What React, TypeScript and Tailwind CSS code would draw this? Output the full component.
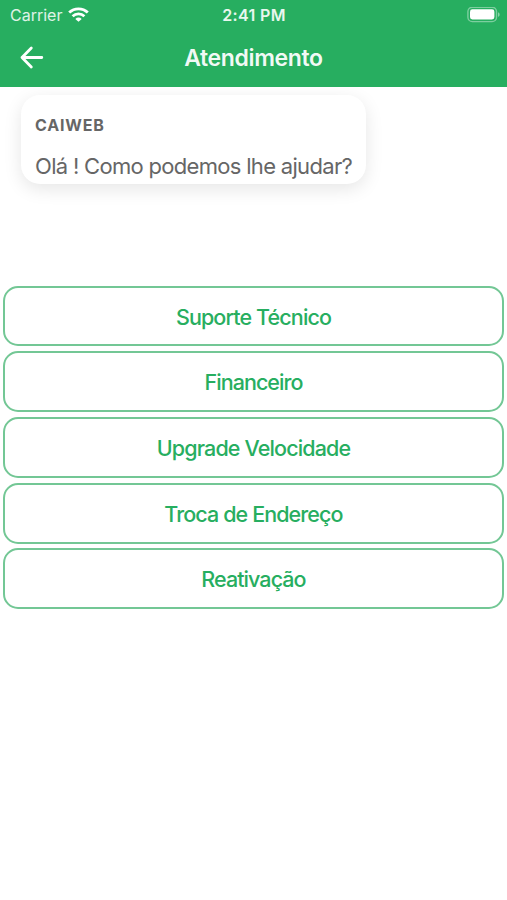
import React from 'react';

const OPTIONS = [
  { label: 'Suporte Técnico', box: 'h-[60px] mb-[5px]', text: 'tracking-[-0.88px]' },
  { label: 'Financeiro', box: 'h-[61px] mb-[5px]', text: 'tracking-[-0.94px]' },
  { label: 'Upgrade Velocidade', box: 'h-[61px] mb-[5px]', text: 'tracking-[-0.86px]' },
  { label: 'Troca de Endereço', box: 'h-[61px] mb-[4px]', text: 'tracking-[-0.9px]' },
  { label: 'Reativação', box: 'h-[61px]', text: 'tracking-[-0.94px]' },
];

const WifiIcon = () => (
  <svg className="h-[15px] w-[21px]" viewBox="0 0 21 15" fill="none" stroke="white" strokeWidth="2.8">
    <path d="M1.2 5.6a13.4 13.4 0 0 1 18.6 0" />
    <path d="M4.6 9.2a8.5 8.5 0 0 1 11.8 0" />
    <path d="M10.5 14.8 7.3 11.9a4.7 4.7 0 0 1 6.4 0z" fill="white" stroke="none" />
  </svg>
);

const BatteryIcon = () => (
  <svg className="h-4 w-[34px]" viewBox="0 0 34 16" fill="none">
    <rect x="0.9" y="0.2" width="28.6" height="14.4" rx="4.4" stroke="white" strokeOpacity="0.4" strokeWidth="1.4" />
    <rect x="3" y="2.3" width="24.4" height="10.2" rx="2.4" fill="white" />
    <path d="M31 5.2c2.2.8 2.2 3.8 0 4.6z" fill="white" fillOpacity="0.45" />
  </svg>
);

const BackIcon = () => (
  <svg className="h-6 w-6" viewBox="0 0 24 24" fill="none" stroke="white" strokeWidth="2.8" strokeLinecap="round" strokeLinejoin="round">
    <path d="M11.3 2.1 2 11.5l9.3 9.4M2 11.5h19.8" />
  </svg>
);

function StatusBar() {
  return (
    <div className="grid h-[29px] grid-cols-3 items-center text-[16px] text-white">
      <div className="flex items-center gap-[6px] pl-[10px]">
        <span className="text-white/85">Carrier</span>
        <WifiIcon />
      </div>
      <span className="pl-px text-center font-semibold tracking-[0.35px] text-white/90">2:41 PM</span>
      <div className="flex justify-end pr-[6px]">
        <BatteryIcon />
      </div>
    </div>
  );
}

function App() {
  return (
    <div className="h-[900px] w-[507px] overflow-hidden bg-white font-['Inter','Liberation_Sans',sans-serif]">
      <header className="relative z-10 h-[87px] bg-[#27ae60]">
        <StatusBar />
        <div className="grid h-[58px] grid-cols-[1fr_auto_1fr] items-center">
          <button className="ml-[20px] w-6" aria-label="Voltar">
            <BackIcon />
          </button>
          <h1 className="text-[23px] font-semibold tracking-[-0.35px] text-white/95">Atendimento</h1>
        </div>
      </header>

      <main>
        <section className="ml-[21px] mt-[8px] h-[89px] w-[345px] rounded-[19px] bg-white pl-[14px] pt-[19px] text-[#666666] shadow-[0_5px_18px_rgba(0,0,0,0.1)]">
          <p className="text-[16px] font-bold leading-[22px] tracking-[0.8px]">CAIWEB</p>
          <p className="mt-[15px] whitespace-nowrap text-[22px] leading-[30px] tracking-[-0.69px]">Olá ! Como podemos lhe ajudar?</p>
        </section>

        <div className="mt-[102px] flex flex-col px-[3px]">
          {OPTIONS.map((option) => (
            <button
              key={option.label}
              className={`flex w-full items-center justify-center rounded-[15px] border-2 border-[#73c795] pt-[2px] text-[21.5px] font-medium text-[#27ae60] ${option.box}`}
            >
              <span className={option.text}>{option.label}</span>
            </button>
          ))}
        </div>
      </main>
    </div>
  );
}

export default App;
